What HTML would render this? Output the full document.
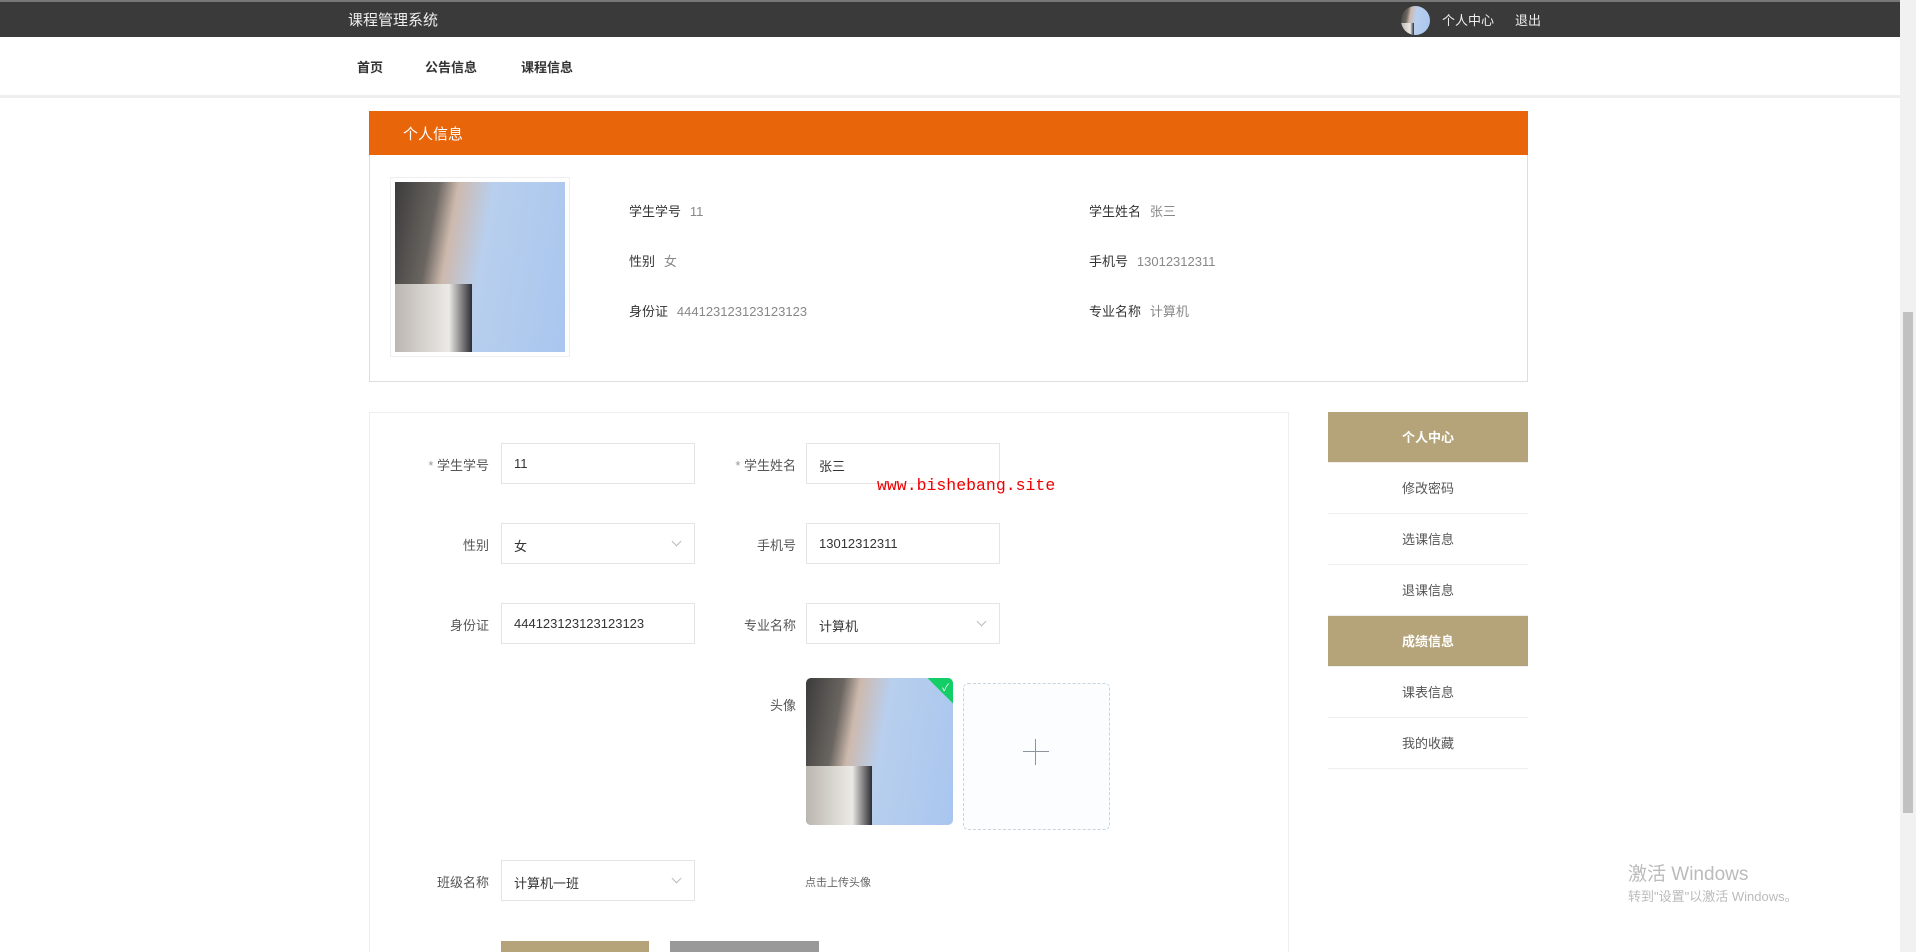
<!DOCTYPE html>
<html><head><meta charset="utf-8"><style>
*{margin:0;padding:0;box-sizing:border-box}
html,body{width:1916px;height:952px;overflow:hidden}
body{background:#fff;font-family:"Liberation Sans","Noto Sans CJK SC",sans-serif;position:relative;color:#333}
.a{position:absolute}
.top{left:0;top:0;width:1900px;height:37px;background:#3a3a3a;border-top:2px solid #777}
.nav{left:0;top:37px;width:1900px;height:61px;background:#fff;border-bottom:3px solid #eee}
.photo{background:linear-gradient(100deg,#3b3b3b 0%,#6a6560 22%,#cdb9ad 32%,#b8cfee 50%,#a9c6ef 100%)}
.photo::after{content:"";position:absolute;left:0;bottom:0;width:45%;height:40%;background:linear-gradient(90deg,#bcb6b0,#eceae6 70%,#2d2d33)}
.lbl{font-size:13px;color:#333}
.val{font-size:13px;color:#888}
.inp{border:1px solid #e4e4e4;height:41px;width:194px;font-size:13px;color:#333;padding:12px 12px;background:#fff}
.fl{font-size:13px;color:#555;text-align:right;width:120px}
.side{left:1328px;width:200px;height:51px;font-size:13px;color:#555;text-align:center;line-height:51px;border-bottom:1px solid #eee}
.act{background:#b5a47a;color:#fff;font-weight:bold}
.arr{position:absolute;right:14px;top:14px;width:7px;height:7px;border-right:1px solid #bbb;border-bottom:1px solid #bbb;transform:rotate(45deg)}
</style></head><body>
<div class="a top"></div>
<div class="a" style="left:348px;top:9px;font-size:15px;color:#eee">课程管理系统</div>
<div class="a photo" style="left:1401px;top:6px;width:29px;height:29px;border-radius:50%;overflow:hidden"></div>
<div class="a" style="left:1442px;top:10px;font-size:13px;color:#eee">个人中心</div>
<div class="a" style="left:1515px;top:10px;font-size:13px;color:#eee">退出</div>
<div class="a nav"></div>
<div class="a" style="left:357px;top:57px;font-size:13px;font-weight:bold">首页</div>
<div class="a" style="left:425px;top:57px;font-size:13px;font-weight:bold">公告信息</div>
<div class="a" style="left:521px;top:57px;font-size:13px;font-weight:bold">课程信息</div>

<div class="a" style="left:369px;top:111px;width:1159px;height:271px;border:1px solid #ddd;border-top:none"></div>
<div class="a" style="left:369px;top:111px;width:1159px;height:44px;background:#e8650a"></div>
<div class="a" style="left:403px;top:123px;font-size:15px;color:#fff">个人信息</div>
<div class="a" style="left:390px;top:177px;width:180px;height:180px;border:1px solid #eee"></div>
<div class="a photo" style="left:395px;top:182px;width:170px;height:170px"></div>
<div class="a" style="left:629px;top:201px"><span class="lbl">学生学号</span>&nbsp;&nbsp;<span class="val">11</span></div>
<div class="a" style="left:629px;top:251px"><span class="lbl">性别</span>&nbsp;&nbsp;<span class="val">女</span></div>
<div class="a" style="left:629px;top:301px"><span class="lbl">身份证</span>&nbsp;&nbsp;<span class="val">444123123123123123</span></div>
<div class="a" style="left:1089px;top:201px"><span class="lbl">学生姓名</span>&nbsp;&nbsp;<span class="val">张三</span></div>
<div class="a" style="left:1089px;top:251px"><span class="lbl">手机号</span>&nbsp;&nbsp;<span class="val">13012312311</span></div>
<div class="a" style="left:1089px;top:301px"><span class="lbl">专业名称</span>&nbsp;&nbsp;<span class="val">计算机</span></div>

<div class="a" style="left:369px;top:412px;width:920px;height:540px;border:1px solid #eee;border-bottom:none"></div>
<div class="a fl" style="left:369px;top:455px"><span style="color:#999">* </span>学生学号</div>
<div class="a inp" style="left:501px;top:443px">11</div>
<div class="a fl" style="left:676px;top:455px"><span style="color:#999">* </span>学生姓名</div>
<div class="a inp" style="left:806px;top:443px">张三</div>
<div class="a fl" style="left:369px;top:535px">性别</div>
<div class="a inp" style="left:501px;top:523px">女<span class="arr"></span></div>
<div class="a fl" style="left:676px;top:535px">手机号</div>
<div class="a inp" style="left:806px;top:523px">13012312311</div>
<div class="a fl" style="left:369px;top:615px">身份证</div>
<div class="a inp" style="left:501px;top:603px">444123123123123123</div>
<div class="a fl" style="left:676px;top:615px">专业名称</div>
<div class="a inp" style="left:806px;top:603px">计算机<span class="arr"></span></div>
<div class="a fl" style="left:676px;top:695px">头像</div>
<div class="a photo" style="left:806px;top:678px;width:147px;height:147px;border-radius:5px;overflow:hidden"><div style="position:absolute;right:-15px;top:-6px;width:40px;height:22px;background:#13ce66;transform:rotate(45deg)"></div><div style="position:absolute;right:4px;top:1px;color:#fff;font-size:10px">✓</div></div>
<div class="a" style="left:963px;top:683px;width:147px;height:147px;border:1px dashed #c8d4dc;border-radius:5px;background:#fbfdff"></div>
<div class="a" style="left:1023px;top:751px;width:26px;height:1px;background:#8c939d"></div>
<div class="a" style="left:1035px;top:739px;width:1px;height:26px;background:#8c939d"></div>
<div class="a fl" style="left:369px;top:872px">班级名称</div>
<div class="a inp" style="left:501px;top:860px">计算机一班<span class="arr"></span></div>
<div class="a" style="left:805px;top:874px;font-size:11px;color:#666">点击上传头像</div>
<div class="a" style="left:501px;top:941px;width:148px;height:11px;background:#b5a47a"></div>
<div class="a" style="left:670px;top:941px;width:149px;height:11px;background:#999"></div>
<div class="a" style="left:877px;top:476px;font-family:'Liberation Mono',monospace;font-size:16.5px;color:#e00">www.bishebang.site</div>

<div class="a side act" style="top:412px">个人中心</div>
<div class="a side" style="top:463px">修改密码</div>
<div class="a side" style="top:514px">选课信息</div>
<div class="a side" style="top:565px">退课信息</div>
<div class="a side act" style="top:616px">成绩信息</div>
<div class="a side" style="top:667px">课表信息</div>
<div class="a side" style="top:718px">我的收藏</div>

<div class="a" style="left:1628px;top:859px;font-size:19px;color:#bbb">激活 Windows</div>
<div class="a" style="left:1628px;top:886px;font-size:13px;color:#bbb">转到"设置"以激活 Windows。</div>
<div class="a" style="left:1900px;top:0;width:16px;height:952px;background:#f1f1f1"></div>
<div class="a" style="left:1903px;top:312px;width:10px;height:501px;background:#c1c1c1"></div>
</body></html>
